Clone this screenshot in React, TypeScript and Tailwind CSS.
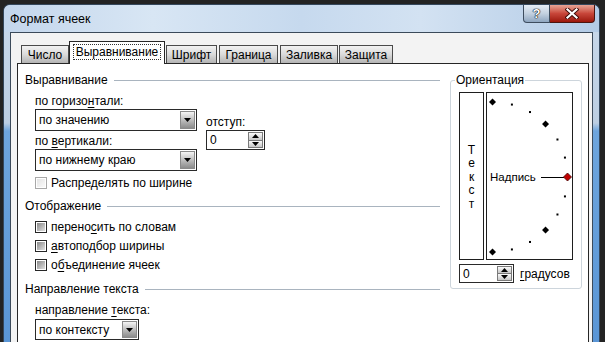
import type { ReactNode } from 'react';

const TABS = [
    { label: 'Число', className: 'w-[48px]' },
    { label: 'Выравнивание', className: 'w-[96px]', active: true },
    { label: 'Шрифт', className: 'w-[51px] ml-[1px]' },
    { label: 'Граница', className: 'w-[59px] ml-[2px]' },
    { label: 'Заливка', className: 'w-[58px] ml-[2px]' },
    { label: 'Защита', className: 'w-[54px] ml-[1px]' },
];

// points of the orientation dial, every 15 degrees
const DIAL = Array.from({ length: 13 }, (_, i) => {
    const k = i - 6;
    const a = (k * 15 * Math.PI) / 180;
    return { k, x: 5.5 + 75 * Math.cos(a), y: 84 + 75 * Math.sin(a) };
});

function Key({ children }: { children: ReactNode }) {
    return <span className="underline decoration-1 underline-offset-[2px]">{children}</span>;
}

function Arrow({ up }: { up?: boolean }) {
    return (
        <svg width="7" height="4" viewBox="0 0 7 4">
            <polygon points={up ? '0,4 7,4 3.5,0' : '0,0 7,0 3.5,4'} fill="#000" />
        </svg>
    );
}

function Select({ value, className }: { value: string; className: string }) {
    return (
        <div className={`flex items-stretch border border-[#2a2a2a] bg-white ${className}`}>
            <span className="flex flex-1 items-center pl-[3px]">{value}</span>
            <span className="m-[1px] flex w-[15px] items-center justify-center border border-[#8a8a8a] bg-gradient-to-b from-[#f4f4f4] to-[#8c8c8c]">
                <Arrow />
            </span>
        </div>
    );
}

function Spin({ className }: { className: string }) {
    return (
        <div className={`flex items-stretch border border-[#2a2a2a] bg-white ${className}`}>
            <span className="flex flex-1 items-center pl-[3px]">0</span>
            <span className="my-[1px] mr-[1px] flex w-[15px] flex-col">
                <span className="flex flex-1 items-center justify-center border border-[#7a7a7a] bg-gradient-to-b from-[#fbfbfb] to-[#c6c6c6]">
                    <Arrow up />
                </span>
                <span className="flex flex-1 items-center justify-center border border-t-0 border-[#7a7a7a] bg-gradient-to-b from-[#fbfbfb] to-[#c6c6c6]">
                    <Arrow />
                </span>
            </span>
        </div>
    );
}

function Check({ label, disabled, className }: { label: ReactNode; disabled?: boolean; className: string }) {
    return (
        <div className={`flex h-[14px] items-center gap-[4px] pl-[10px] ${className}`}>
            <span
                className={`flex size-[12px] items-center justify-center border bg-white ${
                    disabled ? 'border-[#a8a8a8]' : 'border-[#262626]'
                }`}
            >
                <span
                    className={`size-[8px] bg-gradient-to-br ${
                        disabled ? 'from-[#e4e4e4] to-[#fafafa]' : 'from-[#8a8a8a] to-[#e0e0e0]'
                    }`}
                />
            </span>
            <span>{label}</span>
        </div>
    );
}

function Group({ title, className }: { title: string; className: string }) {
    return (
        <div className={`flex h-[14px] items-center gap-[6px] ${className}`}>
            <span>{title}</span>
            <span className="h-px flex-1 bg-[#a9b4bf]" />
        </div>
    );
}

function Dial() {
    return (
        <div className="relative h-[168px] w-[87px] border border-[#1e1e1e] bg-white">
            <svg width="85" height="166" viewBox="0 0 85 166" className="absolute left-0 top-0">
                <line x1="54" y1="84.5" x2="77" y2="84.5" stroke="#000" strokeWidth="1" />
                {DIAL.map((p) => {
                    if (p.k === 0) {
                        return (
                            <polygon
                                key={p.k}
                                points={`${p.x},${p.y - 4} ${p.x + 4},${p.y} ${p.x},${p.y + 4} ${p.x - 4},${p.y}`}
                                fill="#c00000"
                                stroke="#400000"
                                strokeWidth="0.8"
                            />
                        );
                    }
                    if (Math.abs(p.k) === 6 || Math.abs(p.k) === 3) {
                        return (
                            <polygon
                                key={p.k}
                                points={`${p.x},${p.y - 3.5} ${p.x + 3.5},${p.y} ${p.x},${p.y + 3.5} ${p.x - 3.5},${p.y}`}
                                fill="#000"
                            />
                        );
                    }
                    return <rect key={p.k} x={p.x - 1} y={p.y - 1} width="2" height="2" fill="#000" />;
                })}
            </svg>
            <span className="absolute left-[3px] top-[77px] text-[11.5px]">Надпись</span>
        </div>
    );
}

export default function App() {
    return (
        <div className="h-[342px] w-[605px] overflow-hidden bg-[#232323] pl-[3px] pt-[4px] font-['Liberation_Sans',Arial,sans-serif] text-[12px] leading-[14px] text-black">
            <div className="flex h-[338px] w-[597px] flex-col rounded-t-[7px] border border-b-0 border-[#34475c] bg-[linear-gradient(to_bottom,#c9d9eb_0px,#bccee2_118px,#6ea5dd_126px,#5a96d6_100%)]">
                {/* title bar */}
                <div className="flex h-[27px] items-start rounded-t-[6px] bg-[linear-gradient(to_right,#c3d6ec_0%,#d8e6f4_25%,#c6d9ee_50%,#d3e2f2_70%,#b3cbe6_100%)]">
                    <span className="self-center pl-[6px] pt-[1px] text-[12.5px]">Формат ячеек</span>
                    <div className="ml-auto mr-[4px] flex">
                        <div className="flex h-[18px] w-[27px] items-center justify-center rounded-bl-[4px] border border-t-0 border-[#3d4c5e] bg-gradient-to-b from-[#e6edf5] via-[#c3d1e0] to-[#8fa6c0] text-[13px] font-bold text-white [text-shadow:0_0_1px_#000,0_0_1px_#000,0_0_1px_#000]">
                            ?
                        </div>
                        <div className="flex h-[18px] w-[45px] items-center justify-center rounded-br-[4px] border border-l-0 border-t-0 border-[#4a1510] bg-gradient-to-b from-[#e7a496] via-[#c8463a] to-[#9c1509]">
                            <svg width="14" height="11" viewBox="0 0 14 11">
                                <path d="M2.5 1.5 L11.5 9.5 M11.5 1.5 L2.5 9.5" stroke="#3a0a06" strokeWidth="4" strokeLinecap="square" />
                                <path d="M2.5 1.5 L11.5 9.5 M11.5 1.5 L2.5 9.5" stroke="#fff" strokeWidth="2.2" strokeLinecap="square" />
                            </svg>
                        </div>
                    </div>
                </div>

                {/* client area */}
                <div className="mx-[6px] flex flex-1 flex-col border border-b-0 border-[#3b4a5a] bg-[#f3f3f3]">
                    <div className="flex items-end pl-[10px] pt-[8px]">
                        {TABS.map((tab) =>
                            tab.active ? (
                                <div
                                    key={tab.label}
                                    className={`relative z-10 -mb-px flex h-[23px] items-center justify-center border border-b-0 border-[#262626] bg-white pb-[2px] ${tab.className}`}
                                >
                                    <span className="px-[2px] outline-1 outline-dotted outline-[#333]">{tab.label}</span>
                                </div>
                            ) : (
                                <div
                                    key={tab.label}
                                    className={`flex h-[18px] items-center justify-center border border-b-0 border-[#4a4a4a] bg-gradient-to-b from-[#f2f2f2] via-[#dadada] to-[#b4b4b4] ${tab.className}`}
                                >
                                    {tab.label}
                                </div>
                            ),
                        )}
                    </div>

                    <div className="ml-[6px] mr-[3px] flex flex-1 border border-b-0 border-[#262626] bg-white pl-[7px] pt-[9px]">
                        {/* left column */}
                        <div className="flex w-[415px] flex-col">
                            <Group title="Выравнивание" className="" />
                            <div className="mt-[7px] flex pl-[10px]">
                                <div className="flex w-[162px] flex-col">
                                    <span className="h-[14px]">
                                        по гори<span>з</span>о<Key>н</Key>тали:
                                    </span>
                                    <Select value="по значению" className="mt-[1px] h-[22px]" />
                                    <span className="mt-[3px] h-[14px]">
                                        по <Key>в</Key>ертикали:
                                    </span>
                                    <Select value="по нижнему краю" className="mt-[1px] h-[22px]" />
                                </div>
                                <div className="ml-[9px] flex flex-col pt-[21px]">
                                    <span className="h-[14px]">отступ:</span>
                                    <Spin className="mt-px h-[20px] w-[59px]" />
                                </div>
                            </div>
                            <Check label="Распределять по ширине" disabled className="mt-[5px]" />

                            <Group title="Отображение" className="mt-[9px]" />
                            <Check
                                label={
                                    <>
                                        перено<Key>с</Key>ить по словам
                                    </>
                                }
                                className="mt-[7px]"
                            />
                            <Check
                                label={
                                    <>
                                        <Key>а</Key>втоподбор ширины
                                    </>
                                }
                                className="mt-[5px]"
                            />
                            <Check
                                label={
                                    <>
                                        о<Key>б</Key>ъединение ячеек
                                    </>
                                }
                                className="mt-[5px]"
                            />

                            <Group title="Направление текста" className="mt-[10px]" />
                            <span className="mt-[7px] h-[14px] pl-[10px]">
                                направление <Key>т</Key>екста:
                            </span>
                            <div className="pl-[10px]">
                                <Select value="по контексту" className="mt-[2px] h-[21px] w-[104px]" />
                            </div>
                        </div>

                        {/* orientation */}
                        <fieldset className="ml-[10px] h-[216px] w-[131px] rounded-[3px] border border-[#cdd5dc]">
                            <legend className="ml-[4px] px-[1px]">Ориентация</legend>
                            <div className="flex flex-col px-[8px] pt-[5px]">
                                <div className="flex gap-[2px]">
                                    <div className="flex h-[168px] w-[25px] flex-col items-center justify-center border border-[#1e1e1e] bg-white pt-[3px] leading-[13.5px]">
                                        <span>Т</span>
                                        <span>е</span>
                                        <span>к</span>
                                        <span>с</span>
                                        <span>т</span>
                                    </div>
                                    <Dial />
                                </div>
                                <div className="mt-[4px] flex items-center gap-[6px]">
                                    <Spin className="h-[19px] w-[55px]" />
                                    <span>
                                        <Key>г</Key>радусов
                                    </span>
                                </div>
                            </div>
                        </fieldset>
                    </div>
                </div>
            </div>
        </div>
    );
}
